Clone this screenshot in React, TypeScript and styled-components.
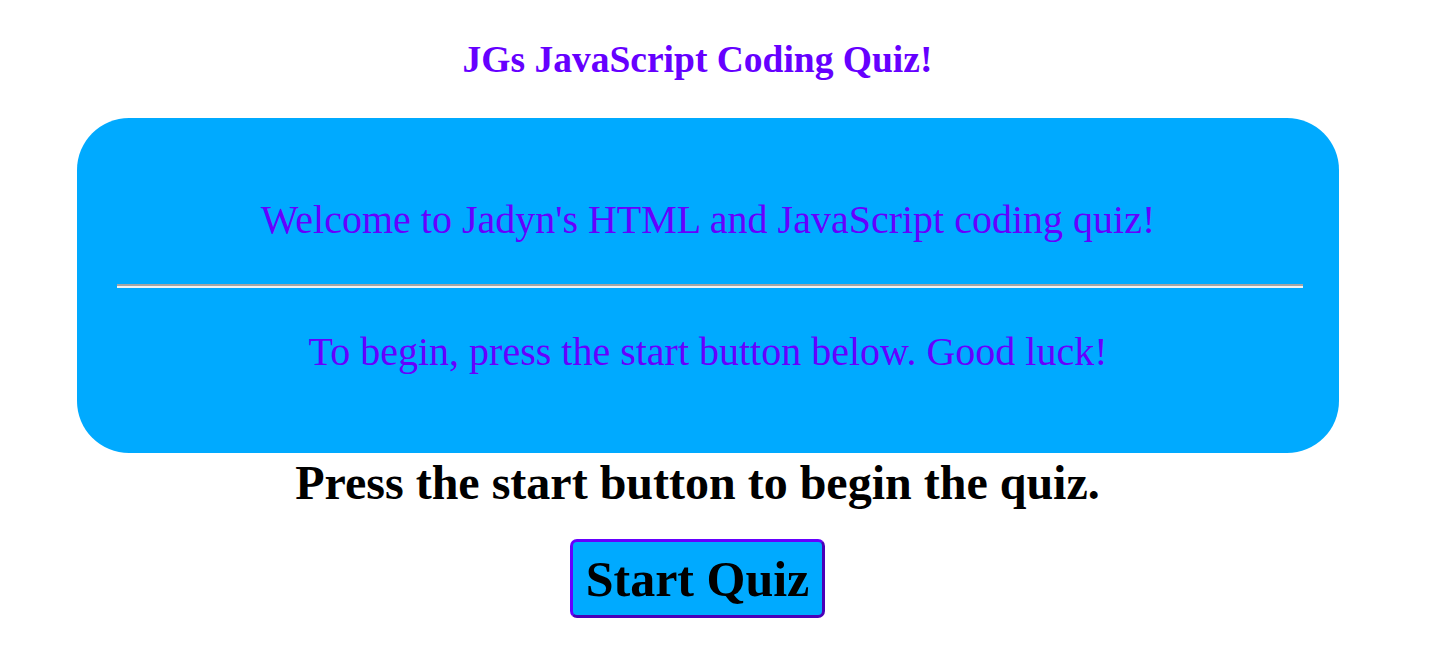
import React from "react";
import styled, { createGlobalStyle } from "styled-components";

const Global = createGlobalStyle`
  html, body { margin: 0; padding: 0; background: #ffffff; }
  body { font-family: "Liberation Serif", "Times New Roman", serif; }
`;

const Page = styled.div`
  width: 1395px;
  display: flex;
  flex-direction: column;
  align-items: center;
`;

const Title = styled.h1`
  margin: 39px 0 0;
  font-size: 37.5px;
  line-height: 42px;
  font-weight: 700;
  color: #6600ff;
  text-align: center;
`;

const Card = styled.section`
  box-sizing: border-box;
  align-self: flex-start;
  margin: 37px 0 0 77px;
  width: 1262px;
  height: 335px;
  padding: 0 40px;
  background: #00aaff;
  border-radius: 52px;
  display: flex;
  flex-direction: column;
`;

const CardText = styled.p<{ $top: number }>`
  margin: ${(p) => p.$top}px 0 0;
  font-size: 40px;
  line-height: 46px;
  color: #6600ff;
  text-align: center;
`;

const Rule = styled.hr`
  margin: 41px -4px 0 0;
  height: 0;
  border: 0;
  border-top: 2px solid #a4a4a4;
  border-bottom: 2px solid #f2f2f2;
  box-sizing: border-box;
`;

const Prompt = styled.h2`
  margin: 2px 0 0;
  font-size: 48px;
  line-height: 56px;
  font-weight: 700;
  color: #000000;
  text-align: center;
`;

const StartButton = styled.button`
  margin-top: 28px;
  box-sizing: border-box;
  width: 255px;
  height: 79px;
  padding: 0;
  font-family: "Liberation Serif", "Times New Roman", serif;
  font-size: 50px;
  font-weight: 700;
  color: #000000;
  background: #00aaff;
  border: 3px solid #6600ff;
  border-right-color: #4a00b8;
  border-bottom-color: #4a00b8;
  border-radius: 7px;
  cursor: pointer;
`;

export default function App() {
  return (
    <>
      <Global />
      <Page>
        <Title>JGs JavaScript Coding Quiz!</Title>
        <Card>
          <CardText $top={79}>Welcome to Jadyn's HTML and JavaScript coding quiz!</CardText>
          <Rule />
          <CardText $top={41}>To begin, press the start button below. Good luck!</CardText>
        </Card>
        <Prompt>Press the start button to begin the quiz.</Prompt>
        <StartButton>Start Quiz</StartButton>
      </Page>
    </>
  );
}
